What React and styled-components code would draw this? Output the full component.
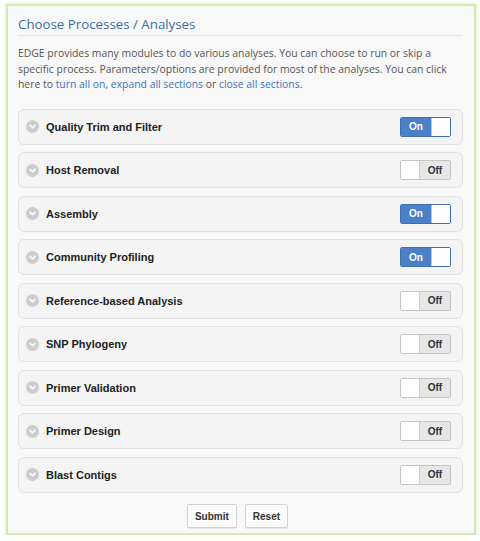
import React from 'react'
import styled, { createGlobalStyle } from 'styled-components'

const GlobalStyle = createGlobalStyle`
  body {
    margin: 0;
    background: #ffffff;
    font-family: "Open Sans", "Liberation Sans", sans-serif;
  }
  * { box-sizing: border-box; }
`

const Frame = styled.div`
  width: 470px;
  height: 531px;
  margin: 4px 0 0 6px;
  border: 2px solid #d3eab0;
  box-shadow: 0 0 2px 1px #e6f3d3;
  background-color: #f8f8f8;
  padding: 8px 11px 0 10px;
`
const Title = styled.h2`
  margin: 0 1px 0 0;
  padding-bottom: 1px;
  font-size: 13.3px;
  line-height: 20px;
  font-weight: 400;
  color: #3c6ea6;
  border-bottom: 1px solid #e2e2e2;
`
const Intro = styled.p`
  margin: 10px 0 0 0;
  font-size: 10.4px;
  line-height: 15.5px;
  color: #555555;
`
const Anchor = styled.a`
  color: #3b74b8;
  text-decoration: none;
  cursor: pointer;
`
const List = styled.div`
  margin-top: 16px;
  display: flex;
  flex-direction: column;
  gap: 7.5px;
`
const Row = styled.div`
  height: 36px;
  display: flex;
  align-items: center;
  padding: 0 11px 0 7px;
  border: 1px solid #e1e1e1;
  border-radius: 6px;
  background-color: #f4f4f4;
`
const Chevron = styled.span`
  width: 13px;
  height: 13px;
  border-radius: 50%;
  background-color: #cdcdcd;
  display: flex;
  align-items: center;
  justify-content: center;
  margin-right: 7px;
`
const Label = styled.span`
  flex: 1;
  font-family: "Liberation Sans", Arial, sans-serif;
  font-weight: 700;
  font-size: 11px;
  color: #222222;
`
const Toggle = styled.div`
  width: 51px;
  height: 20px;
  display: flex;
  flex-direction: ${p => (p.$on ? 'row' : 'row-reverse')};
  border: 1px solid ${p => (p.$on ? '#3f6fae' : '#c4c4c4')};
  border-radius: 2px;
  overflow: hidden;
  cursor: pointer;
`
const ToggleText = styled.span`
  flex: 1;
  display: flex;
  align-items: center;
  justify-content: center;
  font-family: "Liberation Sans", Arial, sans-serif;
  font-weight: 700;
  font-size: 10px;
  color: ${p => (p.$on ? '#ffffff' : '#333333')};
  background-color: ${p => (p.$on ? '#4a80c6' : '#e7e7e7')};
`
const Knob = styled.span`
  width: 19px;
  background-color: #ffffff;
  border-left: ${p => (p.$on ? '1px solid #b8c4d4' : 'none')};
  border-right: ${p => (p.$on ? 'none' : '1px solid #cfcfcf')};
`
const Actions = styled.div`
  margin-top: 11.5px;
  display: flex;
  justify-content: center;
  gap: 8px;
  padding-right: 6px;
`
const Button = styled.button`
  height: 24px;
  padding: 0 7px;
  border: 1px solid #d2d2d2;
  border-radius: 2px;
  background-color: #fbfbfb;
  box-shadow: 0 1px 1px rgba(0, 0, 0, 0.08);
  font-family: "Liberation Sans", Arial, sans-serif;
  font-weight: 700;
  font-size: 10px;
  color: #333333;
  cursor: pointer;
`

const modules = [
  { name: 'Quality Trim and Filter', on: true },
  { name: 'Host Removal', on: false },
  { name: 'Assembly', on: true },
  { name: 'Community Profiling', on: true },
  { name: 'Reference-based Analysis', on: false },
  { name: 'SNP Phylogeny', on: false },
  { name: 'Primer Validation', on: false },
  { name: 'Primer Design', on: false },
  { name: 'Blast Contigs', on: false },
]

export default function App() {
  return (
    <>
      <GlobalStyle />
      <Frame>
        <Title>Choose Processes / Analyses</Title>
        <Intro>
          EDGE provides many modules to do various analyses. You can choose to run or skip a
          specific process. Parameters/options are provided for most of the analyses. You can click
          here to <Anchor>turn all on</Anchor>, <Anchor>expand all sections</Anchor> or{' '}
          <Anchor>close all sections</Anchor>.
        </Intro>
        <List>
          {modules.map(m => (
            <Row key={m.name}>
              <Chevron>
                <svg width="9" height="9" viewBox="0 0 9 9">
                  <path d="M2 3.3 L4.5 5.8 L7 3.3" fill="none" stroke="#fff" strokeWidth="1.6" strokeLinecap="round" strokeLinejoin="round" />
                </svg>
              </Chevron>
              <Label>{m.name}</Label>
              <Toggle $on={m.on}>
                <ToggleText $on={m.on}>{m.on ? 'On' : 'Off'}</ToggleText>
                <Knob $on={m.on} />
              </Toggle>
            </Row>
          ))}
        </List>
        <Actions>
          <Button>Submit</Button>
          <Button>Reset</Button>
        </Actions>
      </Frame>
    </>
  )
}
